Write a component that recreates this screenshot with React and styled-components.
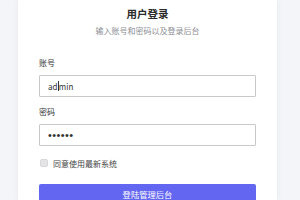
import React from "react";
import styled, { createGlobalStyle } from "styled-components";

const Global = createGlobalStyle`
  html, body { margin: 0; padding: 0; }
  body {
    background: #f4f5f8;
    font-family: "Noto Sans CJK SC", "Noto Sans", sans-serif;
    width: 300px;
    height: 200px;
    overflow: hidden;
  }
`;

const Card = styled.div`
  margin-left: 18px;
  width: 259px;
  height: 200px;
  background: #ffffff;
  box-shadow: 0 0 6px rgba(0, 0, 0, 0.06);
  padding: 7px 21px 0;
  box-sizing: border-box;
  display: flex;
  flex-direction: column;
`;

const Title = styled.h1`
  margin: 0;
  font-size: 10.5px;
  line-height: 14px;
  font-weight: 700;
  color: #2b2b2b;
  text-align: center;
`;

const Subtitle = styled.p`
  margin: 4px 0 0;
  font-size: 8px;
  line-height: 12px;
  color: #8a8d93;
  text-align: center;
`;

const Label = styled.label`
  margin-top: ${(p) => p.$mt}px;
  font-size: 8px;
  line-height: 12px;
  color: #333;
`;

const Input = styled.div`
  margin-top: 6px;
  height: 22px;
  flex: none;
  box-sizing: border-box;
  border: 1px solid #c9c9c9;
  border-radius: 1px;
  padding-left: 8px;
  display: flex;
  align-items: center;
  font-size: 8px;
  color: #333;
`;

const Dots = styled.span`
  font-family: "Liberation Sans", Arial, sans-serif;
  font-size: 11px;
  letter-spacing: 0.4px;
  color: #333;
`;

const Caret = styled.span`
  display: inline-block;
  width: 1px;
  height: 10px;
  background: #333;
  vertical-align: middle;
  margin: 0 0.2px;
`;

const CheckRow = styled.div`
  margin-top: 11px;
  display: flex;
  align-items: center;
  gap: 5px;
  height: 12px;
  flex: none;
  font-size: 8px;
  color: #444;
  padding-left: 1px;
`;

const Box = styled.span`
  width: 8px;
  height: 8px;
  border-radius: 2px;
  background: #e4e4e6;
  border: 1px solid #d8d8da;
  box-sizing: border-box;
`;

const Button = styled.button`
  margin-top: 15px;
  height: 20px;
  flex: none;
  border: none;
  border-radius: 2px 2px 0 0;
  background: #6366f1;
  color: #fff;
  font-family: inherit;
  font-size: 8.3px;
  padding: 0;
  line-height: 20px;
  text-align: center;
`;

export default function App() {
  return (
    <>
      <Global />
      <Card>
        <Title>用户登录</Title>
        <Subtitle>输入账号和密码以及登录后台</Subtitle>
        <Label $mt={20}>账号</Label>
        <Input>
          ad<Caret />min
        </Input>
        <Label $mt={9}>密码</Label>
        <Input>
          <Dots>••••••</Dots>
        </Input>
        <CheckRow>
          <Box />
          <span>同意使用最新系统</span>
        </CheckRow>
        <Button>登陆管理后台</Button>
      </Card>
    </>
  );
}
